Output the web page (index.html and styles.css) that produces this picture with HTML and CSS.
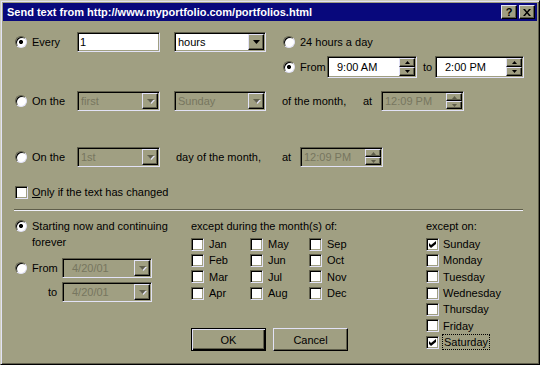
FILE: index.html
```html
<!DOCTYPE html>
<html lang="en">
<head>
  <meta charset="UTF-8" />
  <title>Send text</title>
  <link rel="stylesheet" href="styles.css">
</head>
<body>
  <div class="window">
    <div class="titlebar">
      <span class="title">Send text from http://www.myportfolio.com/portfolios.html</span>
      <div class="title-btns">
        <span class="tbtn">?</span>
        <span class="tbtn"><svg width="8" height="7" viewBox="0 0 8 7"><path d="M0 0h2l2 2.5L6 0h2L5 3.5 8 7H6L4 4.5 2 7H0l3-3.5z"/></svg></span>
      </div>
    </div>

    <div class="content">
      <!-- every N hours -->
      <div class="row first-row">
        <label class="opt w62"><span class="radio on"></span>Every</label>
        <div class="field w83">1</div>
        <div class="combo w92 ml14"><span class="val">hours</span><span class="drop"><svg width="7" height="4" viewBox="0 0 7 4"><path d="M0 0h7L3.5 4z"/></svg></span></div>
        <div class="range">
          <label class="opt h20"><span class="radio"></span>24 hours a day</label>
          <div class="row h22">
            <label class="opt w44"><span class="radio on"></span>From</label>
            <div class="spin w90"><span class="val pad-time">9:00 AM</span><span class="arrows"><b class="sbtn"><svg width="5" height="3" viewBox="0 0 5 3"><path d="M2.5 0L5 3H0z"/></svg></b><b class="sbtn"><svg width="5" height="3" viewBox="0 0 5 3"><path d="M0 0h5L2.5 3z"/></svg></b></span></div>
            <span class="word w18">to</span>
            <div class="spin w89"><span class="val pad-time">2:00 PM</span><span class="arrows"><b class="sbtn"><svg width="5" height="3" viewBox="0 0 5 3"><path d="M2.5 0L5 3H0z"/></svg></b><b class="sbtn"><svg width="5" height="3" viewBox="0 0 5 3"><path d="M0 0h5L2.5 3z"/></svg></b></span></div>
          </div>
        </div>
      </div>

      <!-- on the Nth weekday -->
      <div class="row mt13">
        <label class="opt w62"><span class="radio"></span>On the</label>
        <div class="combo w83 off"><span class="val">first</span><span class="drop"><svg width="7" height="4" viewBox="0 0 7 4"><path d="M0 0h7L3.5 4z"/></svg></span></div>
        <div class="combo w92 ml14 off"><span class="val">Sunday</span><span class="drop"><svg width="7" height="4" viewBox="0 0 7 4"><path d="M0 0h7L3.5 4z"/></svg></span></div>
        <span class="word w97 pl16">of the month,</span>
        <span class="word w18">at</span>
        <div class="spin w83 off"><span class="val">12:09 PM</span><span class="arrows"><b class="sbtn"><svg width="5" height="3" viewBox="0 0 5 3"><path d="M2.5 0L5 3H0z"/></svg></b><b class="sbtn"><svg width="5" height="3" viewBox="0 0 5 3"><path d="M0 0h5L2.5 3z"/></svg></b></span></div>
      </div>

      <!-- on the Nth day -->
      <div class="row mt36">
        <label class="opt w62"><span class="radio"></span>On the</label>
        <div class="combo w83 off"><span class="val">1st</span><span class="drop"><svg width="7" height="4" viewBox="0 0 7 4"><path d="M0 0h7L3.5 4z"/></svg></span></div>
        <span class="word w122 pl16">day of the month,</span>
        <span class="word w18">at</span>
        <div class="spin w83 off"><span class="val">12:09 PM</span><span class="arrows"><b class="sbtn"><svg width="5" height="3" viewBox="0 0 5 3"><path d="M2.5 0L5 3H0z"/></svg></b><b class="sbtn"><svg width="5" height="3" viewBox="0 0 5 3"><path d="M0 0h5L2.5 3z"/></svg></b></span></div>
      </div>

      <label class="cb-line"><span class="check"></span><span><u>O</u>nly if the text has changed</span></label>

      <div class="sep"></div>

      <div class="lower">
        <div class="col-left">
          <label class="opt multi"><span class="radio on"></span><span>Starting now and continuing<br>forever</span></label>
          <div class="row mt8">
            <label class="opt w47"><span class="radio"></span>From</label>
            <div class="combo w90 off"><span class="val pad-date">4/20/01</span><span class="drop"><svg width="7" height="4" viewBox="0 0 7 4"><path d="M0 0h7L3.5 4z"/></svg></span></div>
          </div>
          <div class="row mt4">
            <span class="word w47 pl33">to</span>
            <div class="combo w90 off"><span class="val pad-date">4/20/01</span><span class="drop"><svg width="7" height="4" viewBox="0 0 7 4"><path d="M0 0h7L3.5 4z"/></svg></span></div>
          </div>
        </div>

        <div class="col-months">
          <div class="head">except during the month(s) of:</div>
          <div class="month-grid">
            <label class="cb"><span class="check"></span>Jan</label>
            <label class="cb"><span class="check"></span>May</label>
            <label class="cb"><span class="check"></span>Sep</label>
            <label class="cb"><span class="check"></span>Feb</label>
            <label class="cb"><span class="check"></span>Jun</label>
            <label class="cb"><span class="check"></span>Oct</label>
            <label class="cb"><span class="check"></span>Mar</label>
            <label class="cb"><span class="check"></span>Jul</label>
            <label class="cb"><span class="check"></span>Nov</label>
            <label class="cb"><span class="check"></span>Apr</label>
            <label class="cb"><span class="check"></span>Aug</label>
            <label class="cb"><span class="check"></span>Dec</label>
          </div>
          <div class="buttons">
            <span class="btn default">OK</span>
            <span class="btn">Cancel</span>
          </div>
        </div>

        <div class="col-days">
          <div class="head">except on:</div>
          <label class="cb"><span class="check on"><svg width="7" height="7" viewBox="0 0 7 7"><path d="M0 2l2 2 5-4v3L2 7 0 5z"/></svg></span>Sunday</label>
          <label class="cb"><span class="check"></span>Monday</label>
          <label class="cb"><span class="check"></span>Tuesday</label>
          <label class="cb"><span class="check"></span>Wednesday</label>
          <label class="cb"><span class="check"></span>Thursday</label>
          <label class="cb"><span class="check"></span>Friday</label>
          <label class="cb"><span class="check on"><svg width="7" height="7" viewBox="0 0 7 7"><path d="M0 2l2 2 5-4v3L2 7 0 5z"/></svg></span><span class="focus">Saturday</span></label>
        </div>
      </div>
    </div>
  </div>
</body>
</html>
```

FILE: styles.css
```css
body {
  margin: 0;
  background: #a09f82;
  color: #000;
  font-family: 'Liberation Sans', Arial, sans-serif;
  font-size: 11px;
}
.window {
  width: 540px;
  height: 365px;
  box-sizing: border-box;
  background: #a09f82;
  border: 1px solid;
  border-color: #cfcfbd #000 #000 #cfcfbd;
  box-shadow: inset 1px 1px 0 #e2e2f6, inset -1px -1px 0 #5f5e4b;
  padding: 2px;
}
.titlebar {
  height: 18px;
  background: #08087c;
  color: #fff;
  display: flex;
  align-items: center;
  padding: 0 2px 0 4px;
}
.title {
  flex: 1;
  font-weight: bold;
  font-size: 11px;
  white-space: nowrap;
}
.title-btns {
  display: flex;
  gap: 2px;
}
.tbtn {
  width: 16px;
  height: 14px;
  box-sizing: border-box;
  background: #a09f82;
  color: #000;
  font-weight: bold;
  font-size: 11px;
  display: flex;
  align-items: center;
  justify-content: center;
  border: 1px solid;
  border-color: #e2e2f6 #000 #000 #e2e2f6;
  box-shadow: inset -1px -1px 0 #5f5e4b;
}
.content {
  padding-left: 12px;
}
.row {
  display: flex;
  align-items: flex-start;
}
.first-row {
  margin-top: 11px;
}
.range {
  margin-left: 17px;
}
.mt4 { margin-top: 4px; }
.mt8 { margin-top: 8px; }
.mt13 { margin-top: 13px; }
.mt36 { margin-top: 36px; }
.ml14 { margin-left: 14px; }
.h20 { height: 20px; }
.h22 { height: 22px; margin-top: 4px; }
.w18 { width: 18px; }
.w44 { width: 44px; }
.w47 { width: 47px; }
.w62 { width: 62px; }
.w83 { width: 83px; }
.w89 { width: 89px; }
.w90 { width: 90px; }
.w92 { width: 92px; }
.w97 { width: 97px; }
.w122 { width: 122px; }
.pl16 { padding-left: 16px; }
.pl33 { padding-left: 33px; }

.opt {
  display: flex;
  align-items: center;
  height: 20px;
  flex: none;
  box-sizing: border-box;
}
.h22 .opt { height: 22px; }
.word {
  height: 20px;
  display: flex;
  align-items: center;
  flex: none;
  box-sizing: border-box;
  white-space: nowrap;
}
.h22 .word { height: 22px; padding-left: 6px; }

.radio {
  width: 12px;
  height: 12px;
  box-sizing: border-box;
  border-radius: 50%;
  border: 1px solid;
  border-color: #5f5e4b #e2e2f6 #e2e2f6 #5f5e4b;
  box-shadow: inset 1px 1px 0 #000;
  background: #fff;
  margin-right: 5px;
  flex: none;
}
.radio.on {
  background: radial-gradient(circle at 5px 5px, #000 1.8px, #fff 2.3px);
}

.field, .combo, .spin {
  height: 20px;
  box-sizing: border-box;
  background: #fff;
  border: 1px solid;
  border-color: #5f5e4b #e2e2f6 #e2e2f6 #5f5e4b;
  box-shadow: inset 1px 1px 0 #000, inset -1px -1px 0 #a09f82;
  display: flex;
  align-items: center;
  flex: none;
}
.h22 .spin { height: 22px; }
.field { padding-left: 2px; }
.val {
  flex: 1;
  padding-left: 3px;
  white-space: nowrap;
}
.pad-time { padding-left: 9px; }
.pad-date { padding-left: 9px; }
.off { background: #a09f82; color: #77765f; }

.drop {
  width: 16px;
  height: 16px;
  margin-right: 1px;
  box-sizing: border-box;
  background: #a09f82;
  border: 1px solid;
  border-color: #e2e2f6 #000 #000 #e2e2f6;
  box-shadow: inset -1px -1px 0 #5f5e4b;
  display: flex;
  align-items: center;
  justify-content: center;
}
.drop svg { fill: #000; }
.off .drop svg { fill: #5f5e4b; filter: drop-shadow(1px 1px 0 #e2e2f6); }

.arrows {
  display: flex;
  flex-direction: column;
  align-self: stretch;
  padding: 1px 1px 1px 0;
}
.sbtn {
  width: 16px;
  flex: 1;
  box-sizing: border-box;
  background: #a09f82;
  border: 1px solid;
  border-color: #e2e2f6 #000 #000 #e2e2f6;
  box-shadow: inset -1px -1px 0 #5f5e4b;
  display: flex;
  align-items: center;
  justify-content: center;
}
.sbtn svg { fill: #000; }
.off .sbtn svg { fill: #5f5e4b; }

.check {
  width: 13px;
  height: 13px;
  box-sizing: border-box;
  background: #fff;
  border: 1px solid;
  border-color: #5f5e4b #e2e2f6 #e2e2f6 #5f5e4b;
  box-shadow: inset 1px 1px 0 #000, inset -1px -1px 0 #a09f82;
  flex: none;
  display: flex;
  align-items: center;
  justify-content: center;
  margin-right: 4px;
}
.check svg { fill: #000; }

.cb-line {
  display: flex;
  align-items: center;
  height: 14px;
  margin-top: 18px;
}
.sep {
  height: 0;
  margin: 10px 14px 0 -1px;
  border-top: 1px solid #5f5e4b;
  border-bottom: 1px solid #f0f0fa;
}

.lower {
  display: flex;
  margin-top: 7px;
}
.col-left {
  width: 176px;
  flex: none;
}
.opt.multi {
  height: auto;
  align-items: flex-start;
  line-height: 16px;
}
.opt.multi .radio { margin-top: 2px; }

.col-months {
  width: 235px;
  flex: none;
}
.head {
  height: 16px;
  line-height: 16px;
  margin-bottom: 2px;
}
.month-grid {
  display: grid;
  grid-template-columns: 59px 59px 1fr;
}
.cb {
  display: flex;
  align-items: center;
  height: 16.33px;
}
.month-grid .check { margin-right: 5px; }
.focus {
  outline: 1px dotted #000;
  padding: 1px 1px;
}

.buttons {
  display: flex;
  gap: 7px;
  margin-top: 27px;
}
.btn {
  width: 75px;
  height: 23px;
  box-sizing: border-box;
  border: 1px solid;
  border-color: #e2e2f6 #000 #000 #e2e2f6;
  box-shadow: inset -1px -1px 0 #5f5e4b;
  display: flex;
  align-items: center;
  justify-content: center;
}
.btn.default {
  border: 1px solid #000;
  box-shadow: inset 1px 1px 0 #e2e2f6, inset -1px -1px 0 #000, inset -2px -2px 0 #5f5e4b;
}
```
